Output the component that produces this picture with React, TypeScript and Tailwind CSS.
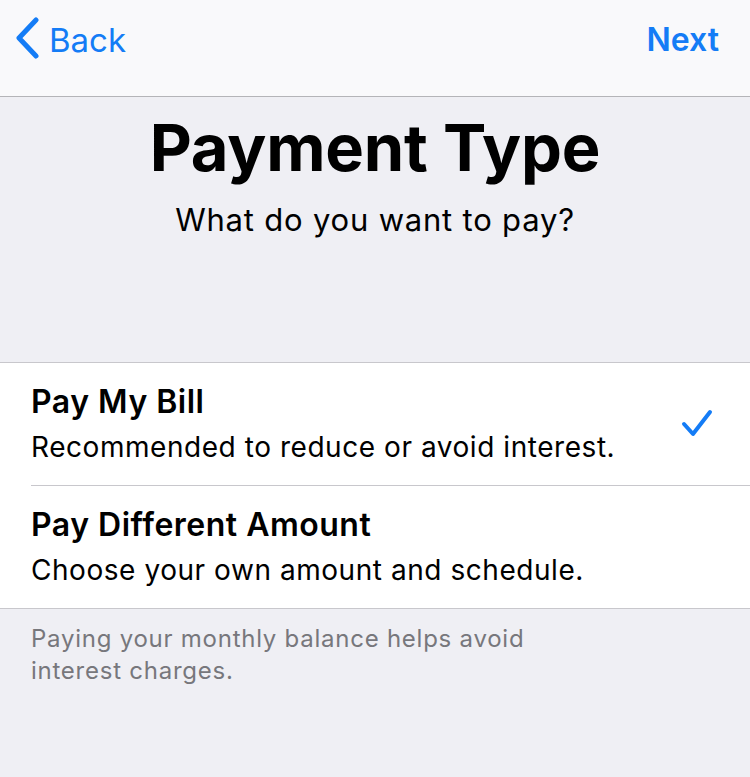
import React from "react";

export default function App() {
  return (
    <div
      className="w-[750px] h-[777px] bg-[#efeff4] overflow-hidden"
      style={{ fontFamily: "Inter, 'Liberation Sans', sans-serif" }}
    >
      {/* Nav bar */}
      <div className="h-[97px] bg-[#f9f9fb] border-b border-[#b4b4b8] flex items-start justify-between pt-[20px]">
        <div className="flex items-start text-[#147cf6]">
          <svg width="36" height="46" viewBox="0 0 36 46" className="ml-[10px] -mt-[3px]">
            <path
              d="M26 3 L9 21 L26 39"
              fill="none"
              stroke="#147cf6"
              strokeWidth="5"
              strokeLinecap="round"
              strokeLinejoin="round"
            />
          </svg>
          <span className="text-[33px] leading-[40px] ml-[3px]">Back</span>
        </div>
        <span className="text-[32px] leading-[40px] font-semibold text-[#147cf6] mr-[31px]">Next</span>
      </div>

      {/* Title */}
      <div className="flex flex-col items-center">
        <h1 className="mt-[18px] text-[65px] leading-[65px] font-bold text-black tracking-[-0.2px]">
          Payment Type
        </h1>
        <p className="mt-[22px] text-[31px] leading-[36px] text-black tracking-[0.8px]">
          What do you want to pay?
        </p>
      </div>

      {/* List */}
      <div className="mt-[124px] bg-white border-t border-b border-[#c8c7cc]">
        <div className="flex items-center justify-between pl-[31px] pr-[36px] pt-[20px] pb-[20px]">
          <div className="flex flex-col">
            <span className="text-[32px] leading-[38px] font-semibold text-black tracking-[0.5px]">
              Pay My Bill
            </span>
            <span className="mt-[8px] text-[28px] leading-[36px] text-black tracking-[0.55px]">
              Recommended to reduce or avoid interest.
            </span>
          </div>
          <svg width="34" height="34" viewBox="0 0 34 34" className="mt-[2px]">
            <path
              d="M4 16 L13 26 L30 4"
              fill="none"
              stroke="#147cf6"
              strokeWidth="4"
              strokeLinecap="round"
              strokeLinejoin="round"
            />
          </svg>
        </div>
        <div className="ml-[31px] border-t border-[#c8c7cc]" />
        <div className="flex flex-col pl-[31px] pt-[20px] pb-[20px]">
          <span className="text-[32px] leading-[38px] font-semibold text-black tracking-[0.5px]">
            Pay Different Amount
          </span>
          <span className="mt-[8px] text-[28px] leading-[36px] text-black tracking-[0.55px]">
            Choose your own amount and schedule.
          </span>
        </div>
      </div>

      {/* Footer */}
      <p className="pt-[14px] pl-[31px] pr-[31px] text-[24px] leading-[32px] text-[#77777c] tracking-[0.75px] w-[600px]">
        Paying your monthly balance helps avoid interest charges.
      </p>
    </div>
  );
}
